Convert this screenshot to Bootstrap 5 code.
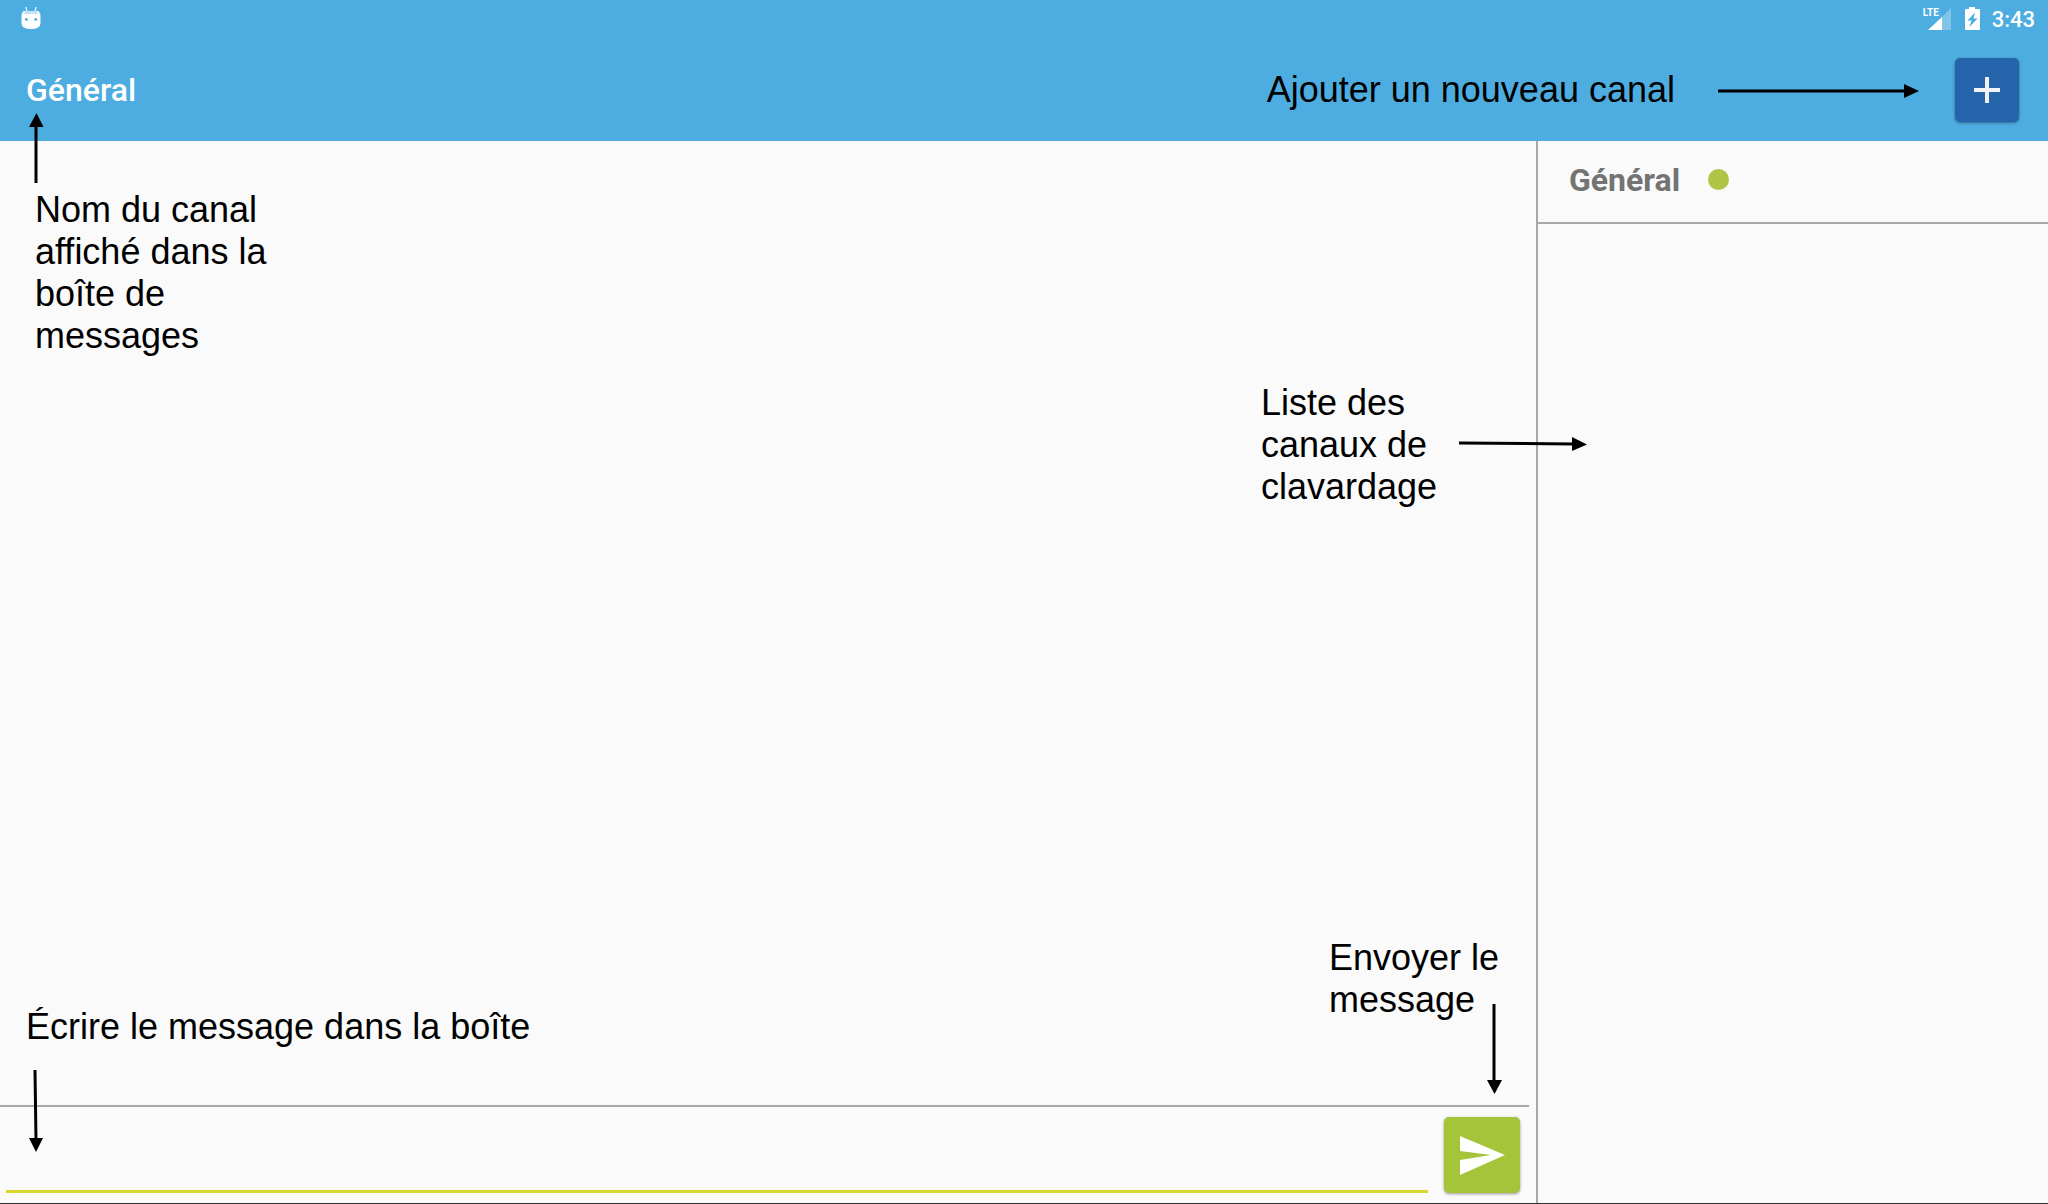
<!DOCTYPE html>
<html lang="fr">
<head>
<meta charset="utf-8">
<meta name="viewport" content="width=device-width, initial-scale=1">
<title>Clavardage – Général</title>
<link rel="stylesheet" href="https://cdn.jsdelivr.net/npm/bootstrap@5.3.0/dist/css/bootstrap.min.css">
<style>
  body { background: #fafafa; font-family: Roboto, "Liberation Sans", sans-serif; }
  .app-header { background: #4dade0; }
  .status-bar { height: 38px; padding: 7px 13px 0 20px; color: #fff; }
  .network { width: 30px; height: 24px; }
  .network-label { position: absolute; top: 1px; left: 0; font-size: 10px; line-height: 10px; }
  .clock { font-size: 22px; line-height: 26px; font-weight: 500; }
  .toolbar { height: 103px; padding: 0 29px 0 26px; }
  .channel-title { font-size: 32px; line-height: 40px; font-weight: 500; }
  .add-btn, .send-btn { border: 0; border-radius: 5px; padding: 0; box-shadow: 0 1px 3px rgba(0,0,0,.4); }
  .add-btn { width: 64px; height: 64px; background: #2364aa; margin-left: 36px; }
  .a-add { margin-left: 43px; }
  .send-btn { width: 76px; height: 76px; background: #a5c43a; }
  .note { font-family: "Liberation Sans", Arial, sans-serif; font-size: 36px; line-height: 42px; color: #000; }
  .over { position: absolute; z-index: 2; white-space: nowrap; }
  .workspace { border-bottom: 1px solid #333; }
  .channels { border-left: 2px solid #a8a8a8; }
  .channel-item { height: 83px; padding: 0 31px 4px; gap: 28px; border-bottom: 2px solid #a8a8a8; color: #737373; }
  .channel-item strong { font-size: 32px; line-height: 40px; }
  .online { width: 21px; height: 21px; background: #b0c445; }
  .composer { margin-right: 7px; padding: 10px 9px 10px 6px; gap: 16px; border-top: 2px solid #a8a8a8; }
  .message-box { border: 0; border-bottom: 3px solid #d8d62c; background: transparent; font-size: 32px; outline: 0; }
  .n-name { left: 35px; top: 48px; }
  .a-name { left: 28px; top: -28px; }
  .n-list { right: 95px; top: 241px; width: 180px; }
  .a-list { right: -51px; top: 295px; }
  .n-send { right: 27px; bottom: 84px; width: 180px; }
  .a-send { right: 34px; bottom: 11px; }
  .n-write { left: 26px; bottom: 57px; }
  .a-write { left: 28px; bottom: -47px; }
</style>
<script src="https://cdn.jsdelivr.net/npm/bootstrap@5.3.0/dist/js/bootstrap.bundle.min.js"></script>
</head>
<body class="d-flex flex-column min-vh-100">
<header class="app-header">
  <div class="status-bar d-flex align-items-start justify-content-between">
    <svg width="22" height="24" viewBox="0 2 22 24" aria-hidden="true">
      <path d="M6 2l1 5M16 2l-1 5" stroke="#fff" stroke-opacity=".8" stroke-width="1.4"/>
      <path d="M3.500 6h15Q20.500 8 20.500 12v6q0 6-9.500 6t-9.500-6v-6Q1.500 8 3.500 6z" fill="#fff"/>
      <path d="M5 6h12l1 3H4z" fill="#4dade0" opacity=".35"/>
      <circle cx="6.300" cy="14.500" r="1.400" fill="#4dade0"/><circle cx="15.700" cy="14.500" r="1.400" fill="#4dade0"/>
    </svg>
    <div class="d-flex align-items-start">
      <div class="network position-relative">
        <span class="network-label fw-bold">LTE</span>
        <svg class="d-block" width="30" height="24" viewBox="0 0 30 24" aria-hidden="true">
          <path d="M28 1v22H19V10z" fill="#fff" opacity=".3"/>
          <path d="M19 10v13H5z" fill="#fff"/>
        </svg>
      </div>
      <svg class="ms-2 me-2" width="23" height="24" viewBox="0 0 23 24" aria-hidden="true">
        <path d="M8 0h6v2h4q1 0 1 1v19q0 1-1 1H5q-1 0-1-1V3q0-1 1-1h3z" fill="#fff"/>
        <path d="M14 5.500L6.500 13.500h4L8.500 20 16.500 11.500h-4z" fill="#4dade0"/>
      </svg>
      <span class="clock">3:43</span>
    </div>
  </div>
  <div class="toolbar d-flex align-items-center">
    <h1 class="channel-title text-white m-0">Général</h1>
    <span class="note ms-auto">Ajouter un nouveau canal</span>
    <svg class="a-add" width="201" height="16" viewBox="0 0 201 16" aria-hidden="true">
      <path d="M0 9h188" stroke="#000" stroke-width="3"/><path d="M186 2l15 7-15 7z"/>
    </svg>
    <button class="add-btn d-flex align-items-center justify-content-center" type="button" aria-label="Ajouter un nouveau canal">
      <svg width="26" height="26" viewBox="0 0 26 26" aria-hidden="true"><path d="M13 0v26M0 13h26" stroke="#f1f3f9" stroke-width="4"/></svg>
    </button>
  </div>
</header>
<main class="workspace row g-0 flex-grow-1">
  <section class="col-9 d-flex flex-column">
    <div class="flex-grow-1 position-relative">
      <svg class="over a-name" width="16" height="70" viewBox="0 0 16 70" aria-hidden="true"><path d="M8 12v58" stroke="#000" stroke-width="3"/><path d="M1 14L8.500 0l7 14z"/></svg>
      <p class="note over n-name m-0">Nom du canal<br>affiché dans la<br>boîte de<br>messages</p>
      <p class="note over n-list m-0">Liste des<br>canaux de<br>clavardage</p>
      <svg class="over a-list" width="128" height="16" viewBox="0 0 128 16" aria-hidden="true"><path d="M0 7l115 1" stroke="#000" stroke-width="3"/><path d="M113 1l15 7.500-15 6.500z"/></svg>
      <p class="note over n-send m-0">Envoyer le<br>message</p>
      <svg class="over a-send" width="16" height="90" viewBox="0 0 16 90" aria-hidden="true"><path d="M8 0v78" stroke="#000" stroke-width="3"/><path d="M1 76h15L8.500 90z"/></svg>
      <label class="note over n-write" for="message">Écrire le message dans la boîte</label>
      <svg class="over a-write" width="16" height="82" viewBox="0 0 16 82" aria-hidden="true"><path d="M7 0l1 70" stroke="#000" stroke-width="3"/><path d="M1 68h14L8 82z"/></svg>
    </div>
    <form class="composer d-flex">
      <input id="message" class="message-box flex-grow-1" type="text">
      <button class="send-btn d-flex align-items-center justify-content-center" type="button" aria-label="Envoyer le message">
        <svg width="46" height="40" viewBox="0 0 46 40" aria-hidden="true"><path d="M1 1l45 19L1 40V25l31-5L1 16z" fill="#fff"/></svg>
      </button>
    </form>
  </section>
  <aside class="channels col-3">
    <div class="channel-item d-flex align-items-center">
      <strong>Général</strong><span class="online rounded-circle"></span>
    </div>
  </aside>
</main>
</body>
</html>
